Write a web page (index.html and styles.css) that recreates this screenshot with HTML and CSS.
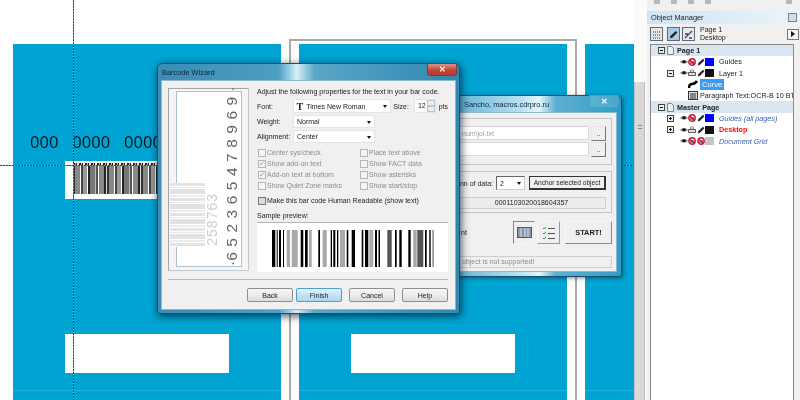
FILE: index.html
```html
<!DOCTYPE html>
<html lang="en">
<head>
    <title>Barcode Wizard</title>
    <link rel="stylesheet" href="styles.css">
</head>
<body>
    <svg class="defs" width="0" height="0">
        <symbol id="i-eye" viewBox="0 0 8 6"><path d="M0 3Q4-1 8 3Q4 6 0 3z" fill="#777"/><circle cx="4" cy="2.8" r="1.5" fill="#111"/></symbol>
        <symbol id="i-off" viewBox="0 0 8 8"><rect x="1.5" y="3" width="5" height="3" fill="#888"/><circle cx="4" cy="4" r="3.2" fill="none" stroke="#c8102e" stroke-width="1.4"/><path d="M1.8 1.8L6.2 6.2" stroke="#c8102e" stroke-width="1.2"/></symbol>
        <symbol id="i-print" viewBox="0 0 8 8"><path d="M2.5 1h3v2h-3z" fill="none" stroke="#666" stroke-width=".7"/><path d="M.5 3.5h7v3h-7z" fill="#ddd" stroke="#333" stroke-width=".8"/></symbol>
        <symbol id="i-pen" viewBox="0 0 8 8"><path d="M6 .8L7.4 2.2L3 6.8L.8 7.4L1.4 5.1z" fill="#222"/></symbol>
        <symbol id="i-minus" viewBox="0 0 7 7"><rect x=".5" y=".5" width="6" height="6" fill="#eee" stroke="#444"/><path d="M2 3.5h3" stroke="#111"/></symbol>
        <symbol id="i-plus" viewBox="0 0 7 7"><rect x=".5" y=".5" width="6" height="6" fill="#eee" stroke="#444"/><path d="M2 3.5h3M3.5 2v3" stroke="#111"/></symbol>
        <symbol id="i-page" viewBox="0 0 7 9"><path d="M.5.5h4l2 2v6h-6z" fill="#e6f2ee" stroke="#6a8a90"/></symbol>
        <symbol id="bars" viewBox="0 0 162 37" preserveAspectRatio="none">
            <path fill="#000" d="M0 0h3.3v37H0zM4.7 0h1v37h-1zM7 0h2v37H7zM11 0h1v37h-1zM28.7 0h2.6v37h-2.6zM33 0h2.7v37H33zM46.3 0H48v37h-1.7zM58.7 0H60v37h-1.3zM61.3 0h2v37h-2zM65 0h1.3v37H65zM74.7 0h1.6v37h-1.6zM79.7 0H83v37h-3.3zM89.7 0h1.6v37h-1.6zM93 0h3.3v37H93zM103 0h2v37h-2zM106.5 0h1.5v37h-1.5zM123 0h1.7v37H123zM127.3 0h2.4v37h-2.4zM136.3 0h2.4v37h-2.4zM153 0h1.7v37H153zM157.3 0h1.4v37h-1.4zM160.7 0h.7v37h-.7z"/>
            <path fill="#a8a8a8" d="M14.7 0H18v37h-3.3zM19.7 0h6v37h-6zM37 0h2.7v37H37zM50.7 0h4v37h-4zM68 0h5v37h-5zM97.3 0h4v37h-4zM141.3 0h3.4v37h-3.4z"/>
            <path fill="#555" d="M115.3 0h4.4v37h-4.4zM145.3 0h6v37h-6z"/>
        </symbol>
    </svg>

    <div class="app">
        <main class="canvas">
            <div class="bleed bleed-a">
                <div class="card-number">000<span>0000</span><span>0000</span></div>
                <div class="card-code"><div class="code-dots"></div><div class="code-bars"></div></div>
                <div class="card-blank"></div>
            </div>
            <div class="bleed bleed-b"><div class="card-blank"></div></div>
            <div class="bleed bleed-c"></div>
            <div class="page-edge"></div>
            <div class="margin-line"></div>
            <div class="guide-v"></div>
            <div class="guide-h"></div>

            <section class="window macro">
                <div class="titlebar"><span>Sancho, macros.cdrpro.ru</span><i class="close close-pale">✕</i></div>
                <div class="client macro-client">
                    <div class="group">
                        <div class="path-row"><div class="field muted">num\jol.txt</div><button class="mini">..</button></div>
                        <div class="path-row"><div class="field"></div><button class="mini">..</button></div>
                    </div>
                    <div class="group group-data">
                        <div class="data-row">
                            <span class="data-label">nn of data:</span>
                            <div class="select small-select">2<b></b></div>
                            <button class="anchor">Anchor selected object</button>
                        </div>
                        <div class="code-value">0001103020018604357</div>
                    </div>
                    <div class="action-row">
                        <span class="action-label">nt</span>
                        <button class="tool tool-on"><svg width="15" height="11"><rect x=".5" y=".5" width="14" height="10" fill="#8a97ad" stroke="#556"/><path d="M4 1v9M8 1v9M11 1v9" stroke="#dfe6ef" stroke-width="1"/></svg></button>
                        <button class="tool"><svg width="14" height="14"><path d="M1 2l1 1 2-2M1 7l1 1 2-2M1 12l1 1 2-2" fill="none" stroke="#2f9a3a"/><path d="M6 2.5h7M6 7.5h7M6 12.5h7" stroke="#555"/></svg></button>
                        <button class="start">START!</button>
                    </div>
                    <div class="status">object is not supported!</div>
                </div>
            </section>

            <section class="window wizard">
                <div class="titlebar"><span>Barcode Wizard</span><i class="close">✕</i></div>
                <div class="client wizard-client">
                    <div class="wizard-body">
                        <div class="sample-panel">
                            <div class="sample-sheet">
                                <div class="sample-stripes"></div>
                                <div class="sample-small">258763</div>
                                <div class="sample-digits"><span>·</span>652365478969<span>·</span></div>
                            </div>
                        </div>
                        <div class="options">
                            <p class="intro">Adjust the following properties for the text in your bar code.</p>
                            <div class="opt-row first">
                                <label>Font:</label>
                                <div class="select font-select"><em>T</em>Times New Roman<b></b></div>
                                <label class="size-label">Size:</label>
                                <div class="spin">12<span class="spin-arrows"><i></i><i></i></span></div>
                                <label class="pts">pts</label>
                            </div>
                            <div class="opt-row">
                                <label>Weight:</label>
                                <div class="select short-select">Normal<b></b></div>
                            </div>
                            <div class="opt-row">
                                <label>Alignment:</label>
                                <div class="select short-select">Center<b></b></div>
                            </div>
                            <div class="checks">
                                <div class="check off"><i></i>Center sys/check</div>
                                <div class="check off"><i></i>Place text above</div>
                                <div class="check off on"><i>✓</i>Show add-on text</div>
                                <div class="check off"><i></i>Show FACT data</div>
                                <div class="check off on"><i>✓</i>Add-on text at bottom</div>
                                <div class="check off"><i></i>Show asterisks</div>
                                <div class="check off"><i></i>Show Quiet Zone marks</div>
                                <div class="check off"><i></i>Show start/stop</div>
                            </div>
                            <div class="check human"><i></i>Make this bar code Human Readable (show text)</div>
                            <p class="preview-label">Sample preview:</p>
                            <div class="preview"><svg class="preview-bars"><use href="#bars"/></svg></div>
                        </div>
                    </div>
                    <div class="separator"></div>
                    <div class="wizard-buttons">
                        <button class="btn btn-back">Back</button>
                        <button class="btn btn-default">Finish</button>
                        <button class="btn">Cancel</button>
                        <button class="btn">Help</button>
                    </div>
                </div>
            </section>
        </main>

        <aside class="dock">
            <div class="dock-side"><div class="dock-scroll"><span></span></div></div>
            <div class="dock-main">
                <div class="top-tools"><i></i><i></i><i></i><i></i><i class="far"></i></div>
                <div class="dock-title"><span>Object Manager</span><i></i></div>
                <div class="dock-tools">
                    <button class="dock-btn"><svg width="9" height="9"><path d="M1 2h3M5 2h3M1 5h3M5 5h3M1 8h3M5 8h3" stroke="#3c8f4a" stroke-width="1.4" stroke-dasharray="1 1"/></svg></button>
                    <button class="dock-btn active"><svg width="9" height="9"><use href="#i-pen"/></svg></button>
                    <button class="dock-btn"><svg width="9" height="9"><path d="M1 8L8 1M1 4h3M5 8h3" stroke="#445" stroke-width="1.3"/></svg></button>
                    <div class="dock-page">Page 1<br>Desktop</div>
                    <button class="dock-arrow"></button>
                </div>
                <div class="tree">
                    <div class="row head pad-page"><svg class="ex"><use href="#i-minus"/></svg><svg class="pg"><use href="#i-page"/></svg>Page 1</div>
                    <div class="row pad-eye">
                        <svg class="ic"><use href="#i-eye"/></svg><svg class="ic"><use href="#i-off"/></svg><svg class="ic pen"><use href="#i-pen"/></svg><i class="swatch blue"></i><span class="name">Guides</span>
                    </div>
                    <div class="row pad-layer">
                        <svg class="ex"><use href="#i-minus"/></svg><svg class="ic"><use href="#i-eye"/></svg><svg class="ic"><use href="#i-print"/></svg><svg class="ic pen"><use href="#i-pen"/></svg><i class="swatch black"></i><span class="name">Layer 1</span>
                    </div>
                    <div class="row pad-item">
                        <svg class="obj" viewBox="0 0 10 9"><path d="M1 8Q1 4 4 4T9 1" fill="none" stroke="#000" stroke-width="2.4"/></svg><span class="picked">Curve</span>
                    </div>
                    <div class="row pad-item">
                        <svg class="obj" viewBox="0 0 10 9"><rect x=".5" y=".5" width="9" height="8" fill="#ddd" stroke="#333"/><path d="M2 3h6M2 5h6M2 7h6" stroke="#333"/></svg><span>Paragraph Text:OCR-B 10 BT</span>
                    </div>
                    <div class="row head pad-page"><svg class="ex"><use href="#i-minus"/></svg><svg class="pg"><use href="#i-page"/></svg>Master Page</div>
                    <div class="row pad-layer">
                        <svg class="ex"><use href="#i-plus"/></svg><svg class="ic"><use href="#i-eye"/></svg><svg class="ic"><use href="#i-off"/></svg><svg class="ic pen"><use href="#i-pen"/></svg><i class="swatch blue"></i><span class="name master">Guides (all pages)</span>
                    </div>
                    <div class="row pad-layer">
                        <svg class="ex"><use href="#i-plus"/></svg><svg class="ic"><use href="#i-eye"/></svg><svg class="ic"><use href="#i-print"/></svg><svg class="ic pen"><use href="#i-pen"/></svg><i class="swatch black"></i><span class="name desk">Desktop</span>
                    </div>
                    <div class="row pad-eye">
                        <svg class="ic"><use href="#i-eye"/></svg><svg class="ic"><use href="#i-off"/></svg><svg class="ic pen"><use href="#i-off"/></svg><i class="swatch grey"></i><span class="name master">Document Grid</span>
                    </div>
                </div>
            </div>
        </aside>
    </div>
</body>
</html>
```

FILE: styles.css
```css
* {
    box-sizing: border-box;
}
html {
    filter: blur(0.4px);
}
body {
    margin: 0;
    width: 800px;
    height: 400px;
    overflow: hidden;
    background-color: #fff;
    color: #222;
    font-family: "Liberation Sans", Arial, sans-serif;
    font-size: 7px;
}
p {
    margin: 0;
}
button {
    font-family: inherit;
    font-size: 7px;
    color: #222;
    padding: 0;
}
.defs {
    display: block;
    height: 0;
}
.app {
    display: flex;
    height: 400px;
}

/* canvas */
.canvas {
    position: relative;
    width: 634px;
    height: 400px;
    overflow: hidden;
    background-color: #fff;
}
.bleed {
    position: absolute;
    top: 44px;
    height: 356px;
    background-color: #00a4d3;
}
.bleed-a {
    left: 13px;
    width: 268px;
}
.bleed-b {
    left: 299px;
    width: 268px;
}
.bleed-c {
    left: 585px;
    width: 49px;
}
.card-number {
    position: absolute;
    left: 17px;
    top: 86px;
    font-family: "Noto Sans", sans-serif;
    font-size: 16.5px;
    line-height: 24px;
    color: #0a1a22;
    white-space: nowrap;
}
.card-number span {
    margin-left: 14px;
}
.card-code {
    position: absolute;
    left: 52px;
    top: 117px;
    width: 110px;
    height: 38px;
    padding: 2px 0 0 8px;
    background-color: #fff;
}
.code-dots {
    height: 2px;
    background: repeating-linear-gradient(90deg, #222 0 2px, #bbb 2px 3px, #222 3px 4px, #e8e8c0 4px 6px);
}
.code-bars {
    width: 100px;
    height: 29px;
    background: repeating-linear-gradient(90deg, #333 0 2px, #888 2px 7px, #fff 7px 8px, #444 8px 10px, #999 10px 14px, #fff 14px 15px, #222 15px 17px, #777 17px 22px, #bbb 22px 23px, #555 23px 25px, #fff 25px 26px, #8a8a8a 26px 31px, #222 31px 33px, #ddd 33px 34px);
}
.card-blank {
    position: absolute;
    left: 52px;
    top: 290px;
    width: 164px;
    height: 39px;
    background-color: #fff;
}
.page-edge {
    position: absolute;
    left: 289px;
    top: 39px;
    width: 288px;
    height: 361px;
    border: solid #a9a9a9;
    border-width: 2px 2px 0 2px;
}
.margin-line {
    position: absolute;
    left: 13px;
    top: 390px;
    width: 621px;
    height: 1px;
    background-color: rgba(255, 255, 255, 0.14);
}
.guide-v {
    position: absolute;
    left: 73px;
    top: 0;
    width: 1px;
    height: 400px;
    background: repeating-linear-gradient(180deg, #2233ff 0 2px, #9aa2ff 2px 3px);
}
.guide-h {
    position: absolute;
    left: 0;
    top: 165px;
    width: 634px;
    height: 1px;
    background: repeating-linear-gradient(90deg, #2233ff 0 2px, #9aa2ff 2px 3px);
}

/* windows */
.window {
    position: absolute;
    display: flex;
    flex-direction: column;
    border-radius: 5px 5px 3px 3px;
    background: linear-gradient(90deg, #3b8db5 0%, #4e9dc2 40%, #9fd2e8 44%, #d8eff8 46%, #5aa6c8 52%, #2f88b0 100%);
    border: 1px solid #1d4f68;
}
.wizard {
    left: 157px;
    top: 63px;
    width: 303px;
    height: 251px;
    box-shadow: 1px 2px 8px rgba(0, 20, 40, 0.75);
}
.macro {
    left: 456px;
    top: 95px;
    width: 166px;
    height: 182px;
    box-shadow: 1px 1px 4px rgba(0, 20, 40, 0.5);
    background: linear-gradient(90deg, #66b4d6 0%, #b9e3f2 40%, #e6f6fb 50%, #5fb0d2 60%, #2e9cc6 100%);
}
.titlebar {
    position: relative;
    display: flex;
    align-items: center;
    height: 16px;
    padding-left: 4px;
    font-size: 7.4px;
    color: #123;
}
.macro .titlebar {
    padding-left: 7px;
}
.close {
    position: absolute;
    top: -1px;
    right: 2px;
    width: 30px;
    height: 13px;
    border-radius: 0 0 3px 3px;
    background: linear-gradient(#dc9288, #c4463a 55%, #b53a2e);
    border: 1px solid #7a3b36;
    color: #fff;
    font-size: 8px;
    font-style: normal;
    font-weight: bold;
    line-height: 11px;
    text-align: center;
}
.close-pale {
    background: rgba(255, 255, 255, 0.12);
    border-color: #4f9bbb;
}
.client {
    flex: 1;
    background-color: #f0f0f0;
    border: 1px solid #8fb7cc;
}
.wizard-client {
    margin: 0 3px 3px;
    padding: 7px 7px 0 6px;
}
.macro-client {
    margin: 0 4px 4px 0;
    padding: 5px 4px 0 0;
    border-left: 0;
}

/* wizard */
.wizard-body {
    display: flex;
    gap: 8px;
    height: 184px;
}
.sample-panel {
    width: 81px;
    height: 183px;
    padding: 2px 6px 3px 7px;
    background-color: #f5f5f5;
    border: 1px solid #a5a5a5;
    border-right-color: #c8c8c8;
    border-bottom-color: #c8c8c8;
}
.sample-sheet {
    position: relative;
    height: 100%;
    background-color: #fff;
    border: 1px solid #a9c4d6;
}
.sample-stripes {
    position: absolute;
    left: -7px;
    bottom: 19px;
    width: 35px;
    height: 64px;
    background: repeating-linear-gradient(180deg, #e4e4e4 0 3px, #fff 3px 4px, #ebebeb 4px 5px, #fff 5px 6px, #e2e2e2 6px 11px, #fff 11px 12px, #ececec 12px 14px, #fff 14px 15px);
}
.sample-small {
    position: absolute;
    left: 28px;
    top: 101px;
    writing-mode: vertical-rl;
    transform: rotate(180deg);
    color: #cdcdcd;
    font-size: 14px;
    letter-spacing: 1px;
    line-height: 14px;
}
.sample-digits {
    position: absolute;
    right: 2px;
    top: 0;
    height: 100%;
    writing-mode: vertical-rl;
    transform: rotate(180deg);
    color: #666;
    font-size: 15.5px;
    line-height: 14px;
    letter-spacing: 5.5px;
    white-space: nowrap;
}
.sample-digits span {
    letter-spacing: 0;
}
.options {
    width: 191px;
}
.intro {
    line-height: 8px;
    height: 8px;
}
.opt-row {
    display: flex;
    align-items: center;
    height: 13px;
    margin-top: 2px;
}
.opt-row.first {
    height: 14px;
    margin-top: 3px;
}
.opt-row label:first-child {
    width: 36px;
}
.select {
    position: relative;
    display: flex;
    align-items: center;
    height: 100%;
    padding-left: 3px;
    background-color: #fff;
    border: 1px solid #e4e4e4;
}
.select b {
    position: absolute;
    right: 3px;
    top: 50%;
    margin-top: -1px;
    border: 2.5px solid transparent;
    border-top: 3px solid #111;
    border-bottom: 0;
}
.font-select {
    width: 100px;
}
.font-select em {
    margin-right: 3px;
    font-family: "Liberation Serif", serif;
    font-size: 10px;
    font-style: normal;
    font-weight: bold;
}
.short-select {
    width: 82px;
}
.size-label {
    margin-left: 2px;
}
.spin {
    position: relative;
    width: 22px;
    height: 100%;
    margin-left: 5px;
    padding: 2px 0 0 3px;
    background-color: #fff;
    border: 1px solid #e4e4e4;
}
.spin-arrows {
    position: absolute;
    right: 0;
    top: 0;
    display: flex;
    flex-direction: column;
    width: 8px;
    height: 100%;
}
.spin-arrows i {
    flex: 1;
    background-color: #e8eef3;
    border: 1px solid #bcc6ce;
}
.pts {
    margin-left: 3px;
}
.checks {
    display: grid;
    grid-template-columns: 102px 89px;
    grid-auto-rows: 11px;
    margin-top: 4px;
}
.check {
    display: flex;
    align-items: center;
    gap: 1px;
    padding-left: 1px;
    white-space: nowrap;
}
.check.off {
    color: #8c8c8c;
}
.check i {
    width: 8px;
    height: 8px;
    background-color: #f4f4f4;
    border: 1px solid #b5b5b5;
    color: #999;
    font-size: 7px;
    font-style: normal;
    line-height: 6px;
    text-align: center;
}
.human {
    height: 11px;
    margin-top: 4px;
}
.human i {
    border-color: #777;
    background-color: #ddd;
}
.preview-label {
    height: 8px;
    margin-top: 6px;
    line-height: 8px;
}
.preview {
    width: 191px;
    height: 50px;
    margin-top: 2px;
    padding: 7px 0 0 15px;
    background-color: #fff;
    border-top: 1px solid #b5b5b5;
}
.preview-bars {
    display: block;
    width: 162px;
    height: 37px;
}
.separator {
    height: 1px;
    margin-top: 7px;
    background-color: #bcbcbc;
}
.wizard-buttons {
    display: flex;
    justify-content: flex-end;
    gap: 7px;
    margin-top: 8px;
}
.btn {
    width: 46px;
    height: 14px;
    background: linear-gradient(#f6f6f6, #ececec 50%, #dcdcdc);
    border: 1px solid #8e8e8e;
    border-radius: 2px;
}
.btn-back {
    margin-right: -4px;
}
.btn-default {
    background: linear-gradient(#e4f4fc, #bfe3f7 55%, #a9d8f3);
    border-color: #4e9fcb;
}

/* macro window */
.group {
    display: flex;
    flex-direction: column;
    gap: 2px;
    height: 47px;
    padding: 7px 0 0 0;
    border: solid #c4c4c4;
    border-width: 1px 1px 1px 0;
}
.path-row {
    display: flex;
    gap: 2px;
    height: 14px;
}
.field {
    flex: none;
    width: 132px;
    height: 14px;
    padding: 3px 0 0 4px;
    background-color: #fff;
    border: 1px solid #d8d8d8;
}
.muted {
    color: #a3a3a3;
}
.mini {
    width: 15px;
    height: 15px;
    background-color: #efefef;
    border: 1px solid;
    border-color: #e6e6e6 #777 #777 #e6e6e6;
    line-height: 6px;
}
.group-data {
    height: 42px;
    margin-top: 6px;
    padding: 4px 5px 0 0;
}
.data-row {
    display: flex;
    align-items: center;
    justify-content: flex-end;
    height: 14px;
}
.data-label {
    white-space: nowrap;
}
.small-select {
    flex: none;
    width: 29px;
    margin-left: 3px;
    border: 1px solid #666;
    border-right-color: #ccc;
    border-bottom-color: #ccc;
}
.anchor {
    flex: none;
    width: 77px;
    height: 14px;
    margin-left: 4px;
    background-color: #f0f0f0;
    border: 1px solid #333;
    border-right-width: 2px;
    border-bottom-width: 2px;
    font-size: 6.6px;
}
.code-value {
    height: 12px;
    margin-top: 5px;
    background-color: #ececec;
    border: 1px solid #d0d0d0;
    line-height: 10px;
    text-align: center;
    white-space: nowrap;
}
.action-row {
    display: flex;
    align-items: center;
    height: 23px;
    margin-top: 8px;
    padding-left: 4px;
}
.action-label {
    width: 53px;
}
.tool {
    display: flex;
    align-items: center;
    justify-content: center;
    width: 23px;
    height: 23px;
    margin-right: 2px;
    background-color: #efefef;
    border: 1px solid;
    border-color: #f6f6f6 #999 #999 #f6f6f6;
}
.tool-on {
    border-color: #888 #f6f6f6 #f6f6f6 #888;
}
.start {
    width: 48px;
    height: 23px;
    margin-left: 3px;
    background-color: #efefef;
    border: 1px solid;
    border-color: #f6f6f6 #888 #888 #f6f6f6;
    font-size: 7.4px;
    font-weight: bold;
}
.status {
    height: 12px;
    margin-top: 12px;
    padding-left: 5px;
    border: solid #cfcfcf;
    border-width: 1px 1px 1px 0;
    color: #8c8c8c;
    line-height: 10px;
}

/* object manager */
.dock {
    display: flex;
    width: 166px;
    height: 400px;
    background-color: #f0f0f0;
}
.dock-side {
    width: 13px;
    padding-top: 82px;
    background-color: #fbfbfb;
}
.dock-scroll {
    display: flex;
    align-items: center;
    justify-content: center;
    width: 11px;
    height: 318px;
    padding-bottom: 228px;
    background-color: #d9d9d9;
    border-left: 1px solid #c4c4c4;
    border-right: 1px solid #bbb;
}
.dock-scroll span {
    width: 4px;
    height: 4px;
    border-top: 1px solid #888;
    border-bottom: 1px solid #888;
}
.dock-main {
    flex: 1;
    min-width: 0;
}
.top-tools {
    display: flex;
    gap: 11px;
    height: 11px;
    padding-left: 7px;
}
.top-tools i {
    width: 6px;
    height: 4px;
    background-color: #b9b9b9;
}
.top-tools i.far {
    margin-left: 64px;
}
.dock-title {
    display: flex;
    align-items: center;
    justify-content: space-between;
    height: 13px;
    padding: 0 3px 0 4px;
    background: linear-gradient(90deg, #cfe4f3, #ebf4fa);
    font-size: 7.4px;
}
.dock-title i {
    width: 9px;
    height: 9px;
    background-color: #d4dde4;
    border: 1px solid #77858f;
}
.dock-tools {
    display: flex;
    align-items: center;
    gap: 2px;
    height: 20px;
    padding-left: 3px;
}
.dock-btn {
    display: flex;
    align-items: center;
    justify-content: center;
    width: 13px;
    height: 14px;
    background-color: #e5e8ea;
    border: 1px solid #5f6a72;
}
.dock-btn.active {
    background-color: #a9cbe6;
    margin-left: 2px;
}
.dock-page {
    margin-left: 3px;
    width: 85px;
    font-size: 7px;
    line-height: 8px;
}
.dock-arrow {
    position: relative;
    width: 12px;
    height: 11px;
    background-color: #f6f6f6;
    border: 1px solid #777;
}
.dock-arrow::after {
    content: "";
    position: absolute;
    left: 3px;
    top: 1px;
    border: 3px solid transparent;
    border-left: 4px solid #111;
    border-right: 0;
}
.tree {
    width: 144px;
    height: 356px;
    margin-left: 3px;
    overflow: hidden;
    background-color: #fff;
    border: solid #8a8a8a;
    border-width: 1px 1px 0 1px;
    font-size: 7.2px;
}
.row {
    display: flex;
    align-items: center;
    height: 11.3px;
    white-space: nowrap;
}
.head {
    background-color: #d9e5f1;
    font-weight: bold;
}
.pad-page {
    padding-left: 7px;
}
.pad-eye {
    padding-left: 29px;
}
.pad-layer {
    padding-left: 16px;
}
.pad-item {
    padding-left: 37px;
}
.ex {
    width: 7px;
    height: 7px;
    flex: none;
    margin-right: 6px;
}
.pad-page .ex {
    margin-right: 2px;
}
.pg {
    width: 7px;
    height: 9px;
    flex: none;
    margin-right: 3px;
}
.ic {
    width: 8px;
    height: 8px;
    flex: none;
}
.pen {
    margin-left: 1px;
}
.swatch {
    width: 9px;
    height: 8px;
    flex: none;
}
.blue {
    background-color: #0000ff;
}
.black {
    background-color: #111;
}
.grey {
    background-color: #c4c4c4;
}
.name {
    margin-left: 5px;
}
.master {
    color: #3a62b8;
    font-style: italic;
}
.desk {
    color: #f01010;
    font-weight: bold;
}
.obj {
    width: 10px;
    height: 9px;
    flex: none;
    margin-right: 2px;
}
.picked {
    padding: 1px 2px;
    background-color: #3a9bf0;
    color: #fff;
    font-size: 7.6px;
}
```
